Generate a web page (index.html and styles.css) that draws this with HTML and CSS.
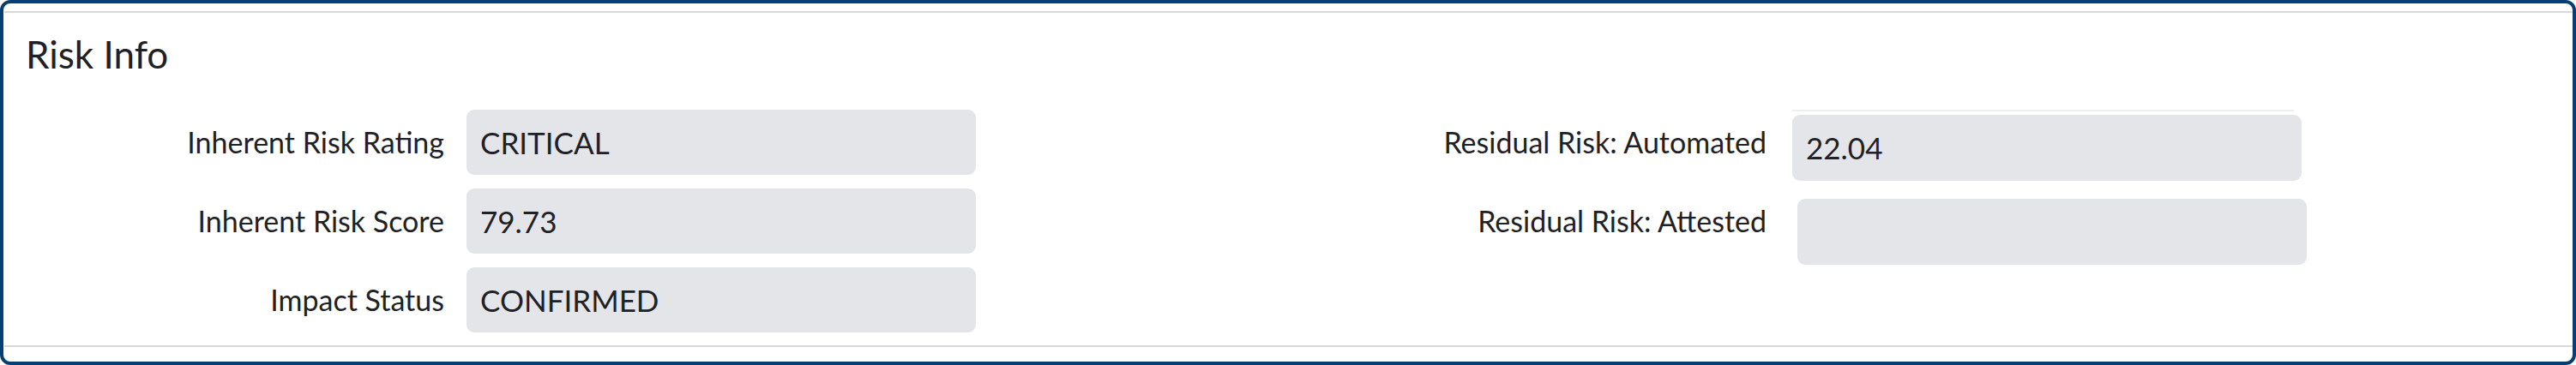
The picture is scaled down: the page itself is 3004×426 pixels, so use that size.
FILE: index.html
```html
<!DOCTYPE html>
<html lang="en">
<head>
<meta charset="utf-8">
<title>Risk Info</title>
<link rel="stylesheet" href="styles.css">
</head>
<body>
<div class="panel">
  <section class="section">
    <h2 class="title">Risk Info</h2>
    <div class="columns">
      <div class="col">
        <div class="field">
          <div class="label">Inherent Risk Rating</div>
          <div class="value">CRITICAL</div>
        </div>
        <div class="field">
          <div class="label">Inherent Risk Score</div>
          <div class="value">79.73</div>
        </div>
        <div class="field">
          <div class="label">Impact Status</div>
          <div class="value">CONFIRMED</div>
        </div>
      </div>
      <div class="col col-right">
        <div class="field">
          <div class="label">Residual Risk: Automated</div>
          <div class="value-wrap">
            <div class="value value-tall">22.04</div>
          </div>
        </div>
        <div class="field">
          <div class="label">Residual Risk: Attested</div>
          <div class="value value-tall value-offset"></div>
        </div>
      </div>
    </div>
  </section>
</div>
</body>
</html>
```
FILE: styles.css
```css
* { box-sizing: border-box; }
html, body { margin: 0; padding: 0; background: #ffffff; }
body {
  font-family: Lato, "Open Sans", "Liberation Sans", sans-serif;
  color: #1e2126;
}
.panel {
  width: 3004px;
  height: 426px;
  border: 4px solid #053f74;
  border-radius: 12px;
  padding: 9px 0 17px 1px;
}
.section {
  height: 392px;
  border-top: 2px solid #d8d9dd;
  border-bottom: 2px solid #d8d9dd;
  padding: 0 0 0 25px;
}
.title {
  margin: 22px 0 0 0;
  font-size: 44px;
  font-weight: 400;
  line-height: 1.2;
}
.columns {
  display: flex;
  margin-top: 38px;
}
.col {
  width: 1542px;
  display: grid;
  grid-auto-rows: 76px;
  row-gap: 16px;
  flex: none;
}
.field {
  display: grid;
  grid-template-columns: 488px 594px;
  column-gap: 26px;
  align-items: start;
}
.col-right .field { column-gap: 30px; }
.label {
  font-size: 34px;
  line-height: 76px;
  text-align: right;
  white-space: nowrap;
}
.value {
  height: 76px;
  width: 594px;
  background: #e4e5e9;
  border-radius: 9px;
  padding: 0 16px;
  font-size: 35px;
  line-height: 76px;
  white-space: nowrap;
}
.value-wrap {
  width: 585px;
  border-top: 2px solid #eeeef1;
  padding-top: 4px;
}
.value-tall {
  height: 77px;
  line-height: 77px;
}
.value-offset {
  margin-top: 12px;
  margin-left: 6px;
}
```
